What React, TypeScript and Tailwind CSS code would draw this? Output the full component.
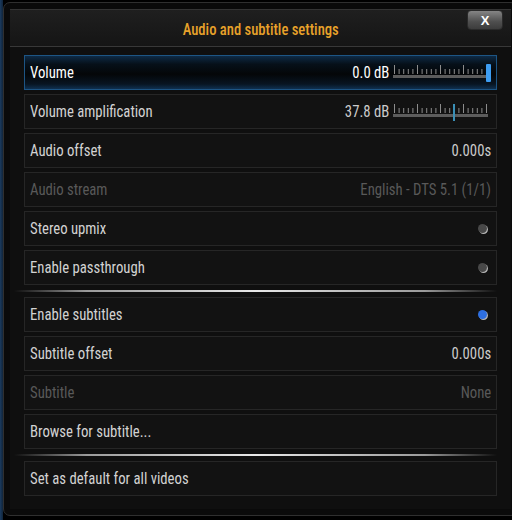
import React from "react";

const FONT = { fontFamily: '"Roboto Condensed", Roboto, "Liberation Sans", sans-serif' };

function Ticks({ pos, color, wide }: { pos: number; color: string; wide: boolean }) {
  const ticks = [];
  for (let i = 0; i < 21; i++) {
    const x = 1 + i * 4.6;
    const tall = i % 5 === 0;
    ticks.push(
      <rect key={i} x={x} y={tall ? 2 : 6} width={1} height={tall ? 9 : 5} fill="#8c8c8c" />
    );
  }
  return (
    <svg width="98" height="20" viewBox="0 0 98 20" className="block">
      {ticks}
      <rect x="0" y="12" width="95" height="3" fill="#5c5c5c" />
      {wide ? (
        <rect x={pos} y="1" width="5" height="18" rx="1" fill={color} />
      ) : (
        <rect x={pos} y="2" width="2" height="17" fill={color} />
      )}
    </svg>
  );
}

function Dot({ on }: { on: boolean }) {
  return (
    <div className="relative w-[10px] h-[10px]">
      <div className="absolute left-[1px] top-[1px] w-[9px] h-[9px] rounded-full bg-[#b5b5b5]" />
      <div
        className={
          "absolute left-0 top-0 w-[9px] h-[9px] rounded-full " +
          (on ? "bg-[#2e6fe0]" : "bg-[#484848]")
        }
      />
    </div>
  );
}

function Txt({ children, right }: { children: React.ReactNode; right?: boolean }) {
  return (
    <span
      className={"inline-block whitespace-nowrap scale-x-[0.92] " + (right ? "origin-right" : "origin-left")}
    >
      {children}
    </span>
  );
}

type RowProps = {
  label: string;
  value?: string;
  disabled?: boolean;
  focused?: boolean;
  right?: React.ReactNode;
};

function Row({ label, value, disabled, focused, right }: RowProps) {
  const base =
    "h-[35px] flex items-center justify-between pl-[5px] pr-[5px] text-[16px] border " +
    (focused
      ? "border-[#1d5584] bg-[linear-gradient(to_bottom,#0e2a45_0%,#061019_25%,#040608_55%,#081522_85%,#0f3050_100%)] text-white"
      : "border-[#262626] bg-[#121212] " + (disabled ? "text-[#595959]" : "text-[#d2d2d2]"));
  return (
    <div className={base}>
      <Txt>{label}</Txt>
      <div className="flex items-center gap-[4px]">
        {value && (
          <span className={disabled ? "text-[#595959]" : focused ? "text-white" : "text-[#cccccc]"}>
            <Txt right>{value}</Txt>
          </span>
        )}
        {right}
      </div>
    </div>
  );
}

function Separator() {
  return (
    <div className="my-[5px] h-[2px] -ml-[10px] bg-[linear-gradient(to_right,rgba(255,255,255,0)_0%,#9a9a9a_15%,#e8e8e8_50%,#9a9a9a_85%,rgba(255,255,255,0)_100%)]" />
  );
}

export default function App() {
  return (
    <div
      className="w-[512px] h-[520px] overflow-hidden bg-[linear-gradient(to_right,#1b3b5f_0px,#10243a_3px,#000_3px)] pt-[2px] pl-[3px]"
      style={FONT}
    >
      <div className="relative w-[515px] h-[514px] rounded-[7px] border border-[#2f2f2f] bg-[#0a0a0a] p-[6px]">
        <div className="flex flex-col h-full bg-[#0f0f0f] border-t border-[#343434]">
          <div className="h-[37px] pt-[3px] flex items-center justify-center border-b border-[#383838] bg-[linear-gradient(to_bottom,#1f1f1f,#151515)]">
            <span className="text-[#e8a22a] text-[17px] font-medium">
              <span className="inline-block scale-x-[0.86]">Audio and subtitle settings</span>
            </span>
          </div>
          <div className="flex flex-col pt-[8px] pl-[14px] pr-[14px]">
            <div className="flex flex-col gap-[4px]">
              <Row label="Volume" value="0.0 dB" focused right={<Ticks pos={93} color="#3d9df2" wide />} />
              <Row label="Volume amplification" value="37.8 dB" right={<Ticks pos={60} color="#3a8fb6" wide={false} />} />
              <Row label="Audio offset" value="0.000s" />
              <Row label="Audio stream" value="English - DTS 5.1 (1/1)" disabled />
              <Row label="Stereo upmix" right={<div className="pr-[3px]"><Dot on={false} /></div>} />
              <Row label="Enable passthrough" right={<div className="pr-[3px]"><Dot on={false} /></div>} />
            </div>
            <Separator />
            <div className="flex flex-col gap-[4px]">
              <Row label="Enable subtitles" right={<div className="pr-[3px]"><Dot on /></div>} />
              <Row label="Subtitle offset" value="0.000s" />
              <Row label="Subtitle" value="None" disabled />
              <Row label="Browse for subtitle..." />
            </div>
            <Separator />
            <Row label="Set as default for all videos" />
          </div>
        </div>
        <div className="absolute left-[463px] top-[7px] w-[36px] h-[20px] rounded-[4px] border border-[#2a2a2a] bg-[linear-gradient(to_bottom,#858585,#4e4e4e_60%,#3c3c3c)] flex items-center justify-center">
          <span className="text-white text-[13px] font-bold leading-none" style={{ fontFamily: '"Liberation Sans", sans-serif' }}>
            X
          </span>
        </div>
      </div>
    </div>
  );
}
